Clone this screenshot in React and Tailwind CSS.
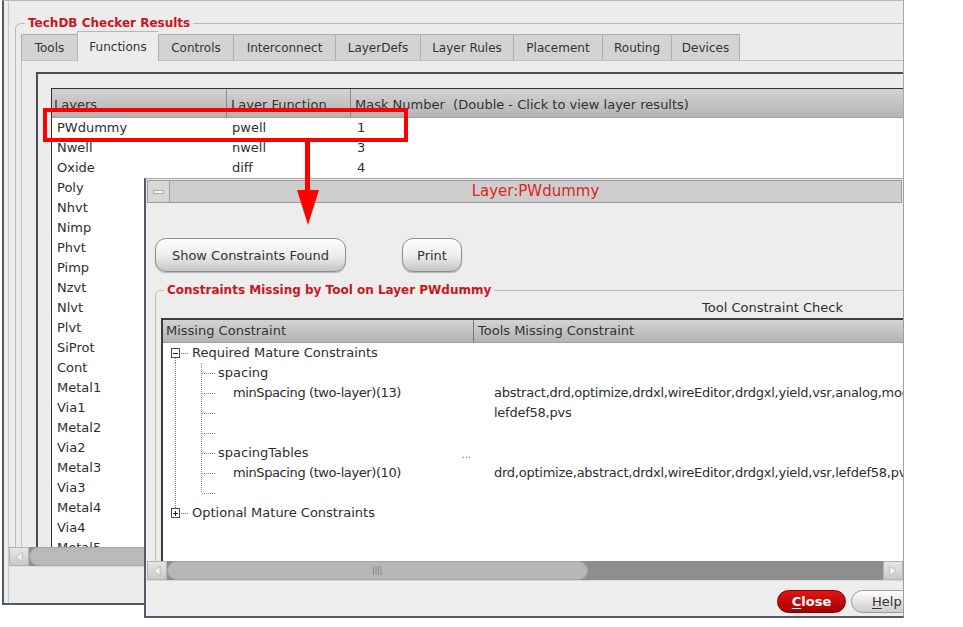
import React from "react";

const tabs = [
  ["Tools", 56],
  ["Functions", 81, true],
  ["Controls", 75],
  ["Interconnect", 102],
  ["LayerDefs", 85],
  ["Layer Rules", 93],
  ["Placement", 89],
  ["Routing", 69],
  ["Devices", 69],
];

const layers = [
  ["PWdummy", "pwell", "1"],
  ["Nwell", "nwell", "3"],
  ["Oxide", "diff", "4"],
  ["Poly", "", ""],
  ["Nhvt", "", ""],
  ["Nimp", "", ""],
  ["Phvt", "", ""],
  ["Pimp", "", ""],
  ["Nzvt", "", ""],
  ["Nlvt", "", ""],
  ["Plvt", "", ""],
  ["SiProt", "", ""],
  ["Cont", "", ""],
  ["Metal1", "", ""],
  ["Via1", "", ""],
  ["Metal2", "", ""],
  ["Via2", "", ""],
  ["Metal3", "", ""],
  ["Via3", "", ""],
  ["Metal4", "", ""],
  ["Via4", "", ""],
  ["Metal5", "", ""],
];

function ArrowBtn({ dir }) {
  return (
    <div className="w-[20px] h-full flex-none flex items-center justify-center bg-gradient-to-b from-[#e6e6e6] to-[#c9c9c9] border border-[#b3b3b3]">
      <svg width="8" height="10" viewBox="0 0 8 10">
        <path
          d={dir === "left" ? "M7 0.5V9.5L1 5Z" : "M1 0.5V9.5L7 5Z"}
          fill="#f6f6f6"
          stroke="#a8a8a8"
          strokeWidth="0.6"
        />
      </svg>
    </div>
  );
}

function Grip() {
  return (
    <svg width="11" height="9" viewBox="0 0 11 9">
      <path d="M1.5 0V9M4 0V9M6.5 0V9M9 0V9" stroke="#8a8a8a" strokeWidth="1" />
    </svg>
  );
}

function NodeGutter({ open }) {
  return (
    <svg width="27" height="20" viewBox="0 0 27 20" className="flex-none">
      {open ? (
        <path d="M12.5 15V20" stroke="#7a7a7a" strokeDasharray="1 1" />
      ) : (
        <path d="M12.5 0V5" stroke="#7a7a7a" strokeDasharray="1 1" />
      )}
      <rect x="8.5" y="5.5" width="8" height="9" fill="#ffffff" stroke="#4a4a4a" />
      <path d="M10 10.5H15" stroke="#222" />
      {!open && <path d="M12.5 8V13" stroke="#222" />}
      <path d="M18 10.5H26" stroke="#7a7a7a" strokeDasharray="1 1" />
    </svg>
  );
}

function ChildGutter({ last }) {
  return (
    <svg width="52" height="20" viewBox="0 0 52 20" className="flex-none">
      <path d="M12.5 0V20" stroke="#8a8a8a" strokeDasharray="1 1" />
      <path d={last ? "M38.5 0V10" : "M38.5 0V20"} stroke="#8a8a8a" strokeDasharray="1 1" />
      <path d="M39 10.5H52" stroke="#8a8a8a" strokeDasharray="1 1" />
    </svg>
  );
}

const treeRows = [
  { type: "node", open: true, label: "Required Mature Constraints" },
  { type: "child", label: "spacing", indent: 3 },
  {
    type: "child",
    label: "minSpacing (two-layer)(13)",
    indent: 18,
    tools: "abstract,drd,optimize,drdxl,wireEditor,drdgxl,yield,vsr,analog,mode,",
  },
  { type: "child", label: "", indent: 18, tools: "lefdef58,pvs" },
  { type: "child", label: "", indent: 18 },
  { type: "child", label: "spacingTables", indent: 3, ellipsis: true },
  {
    type: "child",
    label: "minSpacing (two-layer)(10)",
    indent: 18,
    tools: "drd,optimize,abstract,drdxl,wireEditor,drdgxl,yield,vsr,lefdef58,pvs",
  },
  { type: "child", label: "", indent: 18, last: true },
  { type: "node", open: false, label: "Optional Mature Constraints" },
];

function TreeRow({ row }) {
  return (
    <div className="flex h-[20px] items-center text-[13px] leading-[20px] text-[#2e2e2e] whitespace-nowrap">
      <div className="w-[310px] flex-none flex items-center">
        {row.type === "node" ? (
          <>
            <NodeGutter open={row.open} />
            <span className="ml-[2px]">{row.label}</span>
          </>
        ) : (
          <>
            <ChildGutter last={row.last} />
            {row.indent === 3 ? (
              <span className="ml-[3px]">{row.label}</span>
            ) : (
              <span className="ml-[18px] tracking-[-0.4px]">{row.label}</span>
            )}
            {row.ellipsis && (
              <span className="ml-auto mr-[2px] text-[10px] leading-[10px] text-[#777] pt-[4px]">...</span>
            )}
          </>
        )}
      </div>
      <div className="pl-[21px] tracking-[-0.25px]">{row.tools || ""}</div>
    </div>
  );
}

export default function App() {
  return (
    <div className="relative w-[963px] h-[627px] bg-white overflow-hidden text-[#2e2e2e] font-['DejaVu_Sans',sans-serif]">
      {/* Main window */}
      <div className="absolute left-[2px] top-0 w-[902px] h-[605px] flex flex-col bg-[#ececec] border-l-2 border-b-2 border-[#4f5b69] border-t border-t-[#b8b8b8] border-r border-r-[#a8a8a8]">
        <div className="flex-1 min-h-0 flex flex-col ml-[4px] border-l border-[#c8c8c8]">
          <div className="h-[546px] flex-none overflow-hidden pl-[6px] pt-[14px]">
            <fieldset className="w-[1000px] h-[620px] border border-[#b9b9b9] rounded-tl-[6px] px-[5px]">
              <legend className="ml-[4px] px-[3px] text-[12px] font-bold leading-[16px] text-[#c8161d]">
                TechDB Checker Results
              </legend>
              <div className="flex items-end h-[29px]">
                {tabs.map(([name, w, active]) =>
                  active ? (
                    <div
                      key={name}
                      className="relative z-10 h-[30px] -mb-px flex-none flex items-center justify-center border-l border-t border-[#b5b5b5] bg-[#ececec] text-[12px] text-[#333]"
                      style={{ width: w }}
                    >
                      {name}
                    </div>
                  ) : (
                    <div
                      key={name}
                      className="h-[26px] flex-none flex items-center justify-center pt-[1px] border-l border-t border-[#adadad] bg-[#d3d3d3] text-[12px] text-[#333] last:border-r"
                      style={{ width: w }}
                    >
                      {name}
                    </div>
                  )
                )}
              </div>
              <div className="border-l border-t border-[#c2c2c2] pl-[14px] pt-[11px] h-[560px]">
                <div className="border-t-2 border-l-2 border-[#4e4e4e] pl-[13px] pt-[14px] h-[560px]">
                  <div className="border-t border-l border-[#333] bg-white h-[560px]">
                    <div className="flex h-[29px] bg-gradient-to-b from-[#d3d3d3] to-[#b4b4b4] border-b border-[#a0a0a0] text-[13px] text-[#333] whitespace-nowrap">
                      <div className="w-[174px] flex-none pl-[2px] pt-[6px]">Layers</div>
                      <div className="w-[124px] flex-none pl-[4px] pt-[6px] border-l border-[#8a8a8a]">Layer Function</div>
                      <div className="flex-1 pl-[4px] pt-[6px] border-l border-[#8a8a8a]">
                        Mask Number&nbsp; (Double - Click to view layer results)
                      </div>
                    </div>
                    {layers.map(([n, f, m]) => (
                      <div key={n} className="flex h-[20px] items-center text-[13px] text-[#2e2e2e] whitespace-nowrap">
                        <div className="w-[174px] flex-none pl-[5px]">{n}</div>
                        <div className="w-[124px] flex-none pl-[6px]">{f}</div>
                        <div className="flex-1 pl-[7px]">{m}</div>
                      </div>
                    ))}
                  </div>
                </div>
              </div>
            </fieldset>
          </div>
          {/* horizontal scrollbar */}
          <div className="h-[19px] flex-none flex bg-[#8f8f8f]">
            <ArrowBtn dir="left" />
            <div className="w-[500px] h-full rounded-l-full bg-[#b9b9b9] border border-[#a5a5a5]" />
          </div>
          <div className="flex-1 bg-[#ececec] border-t border-[#dcdcdc]" />
        </div>
      </div>

      {/* Second window */}
      <div className="absolute left-[144px] top-[178px] w-[760px] h-[440px] flex flex-col bg-[#ededed] border-l-2 border-b-2 border-[#4f5b69] border-t border-t-[#a8a8a8] border-r border-r-[#9f9f9f]">
        <div className="mt-[1px] mx-[1px] h-[23px] flex-none flex border border-[#9a9a9a] bg-[#cdcdcd]">
          <div className="w-[22px] h-full flex-none flex items-center justify-center bg-[#d8d8d8] border-r border-[#a0a0a0]">
            <div className="w-[11px] h-[4px] bg-[#f4f4f4] border border-[#a8a8a8]" />
          </div>
          <div className="flex-1 text-center text-[15px] leading-[21px] text-[#e0241c]">Layer:PWdummy</div>
        </div>
        <div className="h-[358px] flex-none overflow-hidden pl-[9px] pt-[35px]">
          <div className="flex h-[34px] gap-[56px]">
            <div className="w-[191px] h-full flex items-center justify-center pt-[1px] rounded-[11px] border border-[#8f8f8f] bg-gradient-to-b from-[#fefefe] via-[#eeeeee] to-[#c6c6c6] text-[13px] text-[#333] shadow-[0_1px_1px_rgba(0,0,0,0.25)]">
              Show Constraints Found
            </div>
            <div className="w-[60px] h-full flex items-center justify-center pt-[1px] rounded-[11px] border border-[#8f8f8f] bg-gradient-to-b from-[#fefefe] via-[#eeeeee] to-[#c6c6c6] text-[13px] text-[#333] shadow-[0_1px_1px_rgba(0,0,0,0.25)]">
              Print
            </div>
          </div>
          <fieldset className="mt-[10px] w-[900px] h-[400px] border border-[#bdbdbd] rounded-tl-[6px] px-[5px]">
            <legend className="ml-[3px] px-[3px] text-[12px] font-bold leading-[16px] text-[#c8161d]">
              Constraints Missing by Tool on Layer PWdummy
            </legend>
            <div className="h-[20px] pl-[541px] text-[13px] leading-[20px] text-[#2e2e2e] whitespace-nowrap">
              Tool Constraint Check
            </div>
            <div className="w-[850px] h-[300px] border-t-2 border-l-2 border-[#3c3c3c] bg-white">
              <div className="flex h-[23px] bg-gradient-to-b from-[#d3d3d3] to-[#b4b4b4] border-b border-[#a0a0a0] text-[13px] leading-[22px] text-[#333] whitespace-nowrap">
                <div className="w-[310px] flex-none pl-[3px]">Missing Constraint</div>
                <div className="flex-1 pl-[4px] border-l border-[#7a7a7a]">Tools Missing Constraint</div>
              </div>
              {treeRows.map((r, i) => (
                <TreeRow key={i} row={r} />
              ))}
            </div>
          </fieldset>
        </div>
        {/* scrollbar */}
        <div className="h-[19px] flex-none flex pl-[1px] bg-[#ededed]">
          <ArrowBtn dir="left" />
          <div className="flex-1 flex bg-[#8e8e8e]">
            <div className="w-[421px] h-full flex items-center justify-center rounded-full bg-[#b7b7b7] border border-[#a4a4a4]">
              <Grip />
            </div>
          </div>
          <ArrowBtn dir="right" />
        </div>
        <div className="flex-1 flex items-start pt-[9px] pl-[631px] gap-[5px] overflow-hidden border-t border-[#dadada]">
          <div className="w-[69px] h-[23px] flex-none flex items-center justify-center rounded-full bg-gradient-to-b from-[#e41414] to-[#a60000] border border-[#7c0000] text-[13px] font-bold text-white">
            <span className="underline underline-offset-2">C</span>lose
          </div>
          <div className="w-[62px] h-[23px] flex-none flex items-center pl-[20px] rounded-full bg-gradient-to-b from-[#ffffff] to-[#cdcdcd] border border-[#9a9a9a] text-[13px] text-[#333]">
            <span className="underline underline-offset-2">H</span>elp
          </div>
        </div>
      </div>

      {/* Red annotation */}
      <div className="absolute left-[43px] top-[108px] w-[365px] h-[34px] border-[4px] border-[#ff0000]" />
      <svg className="absolute left-[296px] top-[141px]" width="24" height="85" viewBox="0 0 24 85">
        <rect x="9" y="0" width="5" height="52" fill="#ff0000" />
        <path d="M1 49H23L12 84Z" fill="#ff0000" />
      </svg>
    </div>
  );
}
